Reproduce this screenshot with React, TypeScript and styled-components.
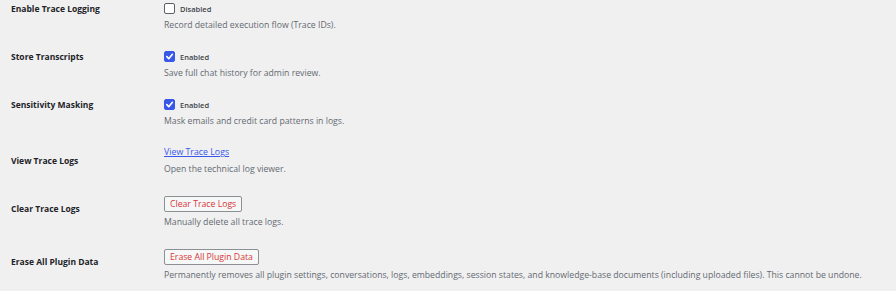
import styled, {createGlobalStyle} from 'styled-components'

const GlobalStyle = createGlobalStyle`
  html, body {
    margin: 0;
    padding: 0;
    background: #f0f0f1;
  }
  body {
    font-family: "Open Sans", "Noto Sans", sans-serif;
    color: #3c434a;
  }
`

interface ISetting {
    label: string;
    description: string;
    control: 'checkbox' | 'link' | 'button';
    checked?: boolean;
    text: string;
}

const settings: ISetting[] = [
    {label: 'Enable Trace Logging', control: 'checkbox', checked: false, text: 'Disabled', description: 'Record detailed execution flow (Trace IDs).'},
    {label: 'Store Transcripts', control: 'checkbox', checked: true, text: 'Enabled', description: 'Save full chat history for admin review.'},
    {label: 'Sensitivity Masking', control: 'checkbox', checked: true, text: 'Enabled', description: 'Mask emails and credit card patterns in logs.'},
    {label: 'View Trace Logs', control: 'link', text: 'View Trace Logs', description: 'Open the technical log viewer.'},
    {label: 'Clear Trace Logs', control: 'button', text: 'Clear Trace Logs', description: 'Manually delete all trace logs.'},
    {label: 'Erase All Plugin Data', control: 'button', text: 'Erase All Plugin Data', description: 'Permanently removes all plugin settings, conversations, logs, embeddings, session states, and knowledge-base documents (including uploaded files). This cannot be undone.'},
]

const Check = ({checked}: {checked?: boolean}) => (
    <CheckBox $checked={checked}>
        {checked && (
            <svg width="9" height="9" viewBox="0 0 10 10">
                <path d="M2 5.2 L4.2 7.4 L8.2 2.6" fill="none" stroke="#fff" strokeWidth="1.8"
                      strokeLinecap="round" strokeLinejoin="round"/>
            </svg>
        )}
    </CheckBox>
)

const App = () => {
    return (
        <>
            <GlobalStyle/>
            <FormTable>
                {settings.map((s) => (
                    <Row key={s.label}>
                        <Label $compact={s.control === 'checkbox'}>{s.label}</Label>
                        <Field>
                            {s.control === 'checkbox' && (
                                <CheckLabel>
                                    <Check checked={s.checked}/>
                                    <CheckText>{s.text}</CheckText>
                                </CheckLabel>
                            )}
                            {s.control === 'link' && <Link href="#">{s.text}</Link>}
                            {s.control === 'button' && <DangerButton>{s.text}</DangerButton>}
                            <Description>{s.description}</Description>
                        </Field>
                    </Row>
                ))}
            </FormTable>
        </>
    )
}
export default App

// ==========================================

const FormTable = styled.div`
  display: flex;
  flex-direction: column;
  width: 896px;
`

const Row = styled.div`
  display: grid;
  grid-template-columns: 164px 1fr;
`

const Label = styled.div<{ $compact?: boolean }>`
  padding: ${(p) => (p.$compact ? '2px' : '10px')} 0 0 11px;
  font-size: 8.5px;
  line-height: 13px;
  font-weight: 700;
  color: #1d2327;
`

const Field = styled.div`
  display: flex;
  flex-direction: column;
  align-items: flex-start;
  padding: 2px 0 16px 0;
`

const CheckLabel = styled.label`
  display: flex;
  align-items: center;
  height: 13px;
  gap: 5px;
`

const CheckBox = styled.span<{ $checked?: boolean }>`
  box-sizing: border-box;
  width: 11px;
  height: 11px;
  border-radius: 2px;
  display: flex;
  align-items: center;
  justify-content: center;
  border: 1px solid ${(p) => (p.$checked ? '#3858e9' : '#5c6066')};
  background: ${(p) => (p.$checked ? '#3858e9' : '#fff')};
`

const CheckText = styled.span`
  font-size: 7.5px;
  font-weight: 600;
  color: #3c434a;
`

const Link = styled.a`
  font-size: 8.8px;
  line-height: 13px;
  color: #3858e9;
  text-decoration: underline;
`

const DangerButton = styled.button`
  box-sizing: border-box;
  height: 16px;
  margin-top: 2px;
  padding: 0 5px;
  border: 1px solid #8c8f94;
  border-radius: 2px;
  background: #f6f7f7;
  color: #d63638;
  font-family: "Open Sans", "Noto Sans", sans-serif;
  font-size: 8.7px;
  line-height: 14px;
  cursor: pointer;
`

const Description = styled.p`
  margin: 4px 0 0 0;
  font-size: 8.7px;
  line-height: 13px;
  color: #646970;
`
